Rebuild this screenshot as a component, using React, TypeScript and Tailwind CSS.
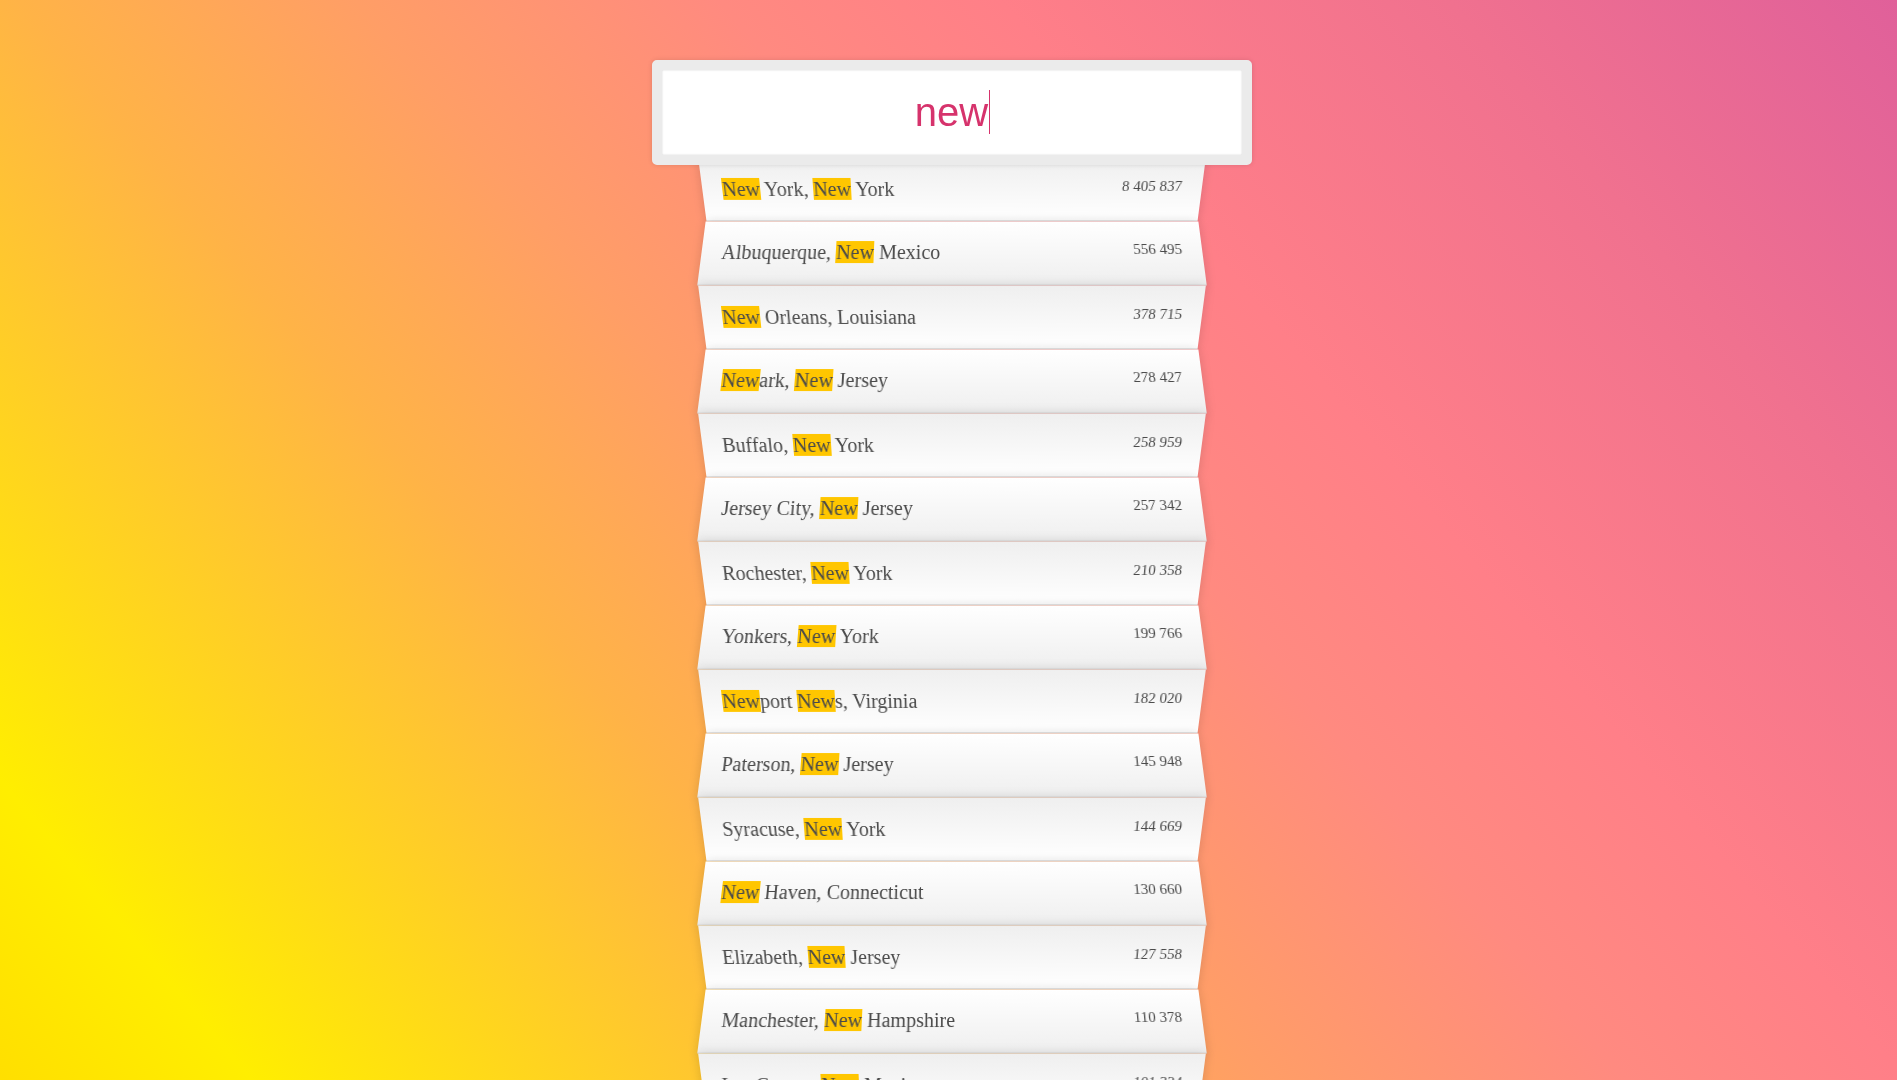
import React from "react";

const cities = [
  { name: "New York, New York", population: "8 405 837" },
  { name: "Albuquerque, New Mexico", population: "556 495" },
  { name: "New Orleans, Louisiana", population: "378 715" },
  { name: "Newark, New Jersey", population: "278 427" },
  { name: "Buffalo, New York", population: "258 959" },
  { name: "Jersey City, New Jersey", population: "257 342" },
  { name: "Rochester, New York", population: "210 358" },
  { name: "Yonkers, New York", population: "199 766" },
  { name: "Newport News, Virginia", population: "182 020" },
  { name: "Paterson, New Jersey", population: "145 948" },
  { name: "Syracuse, New York", population: "144 669" },
  { name: "New Haven, Connecticut", population: "130 660" },
  { name: "Elizabeth, New Jersey", population: "127 558" },
  { name: "Manchester, New Hampshire", population: "110 378" },
  { name: "Las Cruces, New Mexico", population: "101 324" },
  { name: "New Bedford, Massachusetts", population: "95 078" },
  { name: "Newton, Massachusetts", population: "87 971" },
];

const query = "new";

function Highlight({ text }: { text: string }) {
  const parts = text.split(new RegExp(`(${query})`, "gi"));
  return (
    <span>
      {parts.map((part, i) =>
        part.toLowerCase() === query ? (
          <span key={i} className="bg-[#ffc600]">
            {part}
          </span>
        ) : (
          <React.Fragment key={i}>{part}</React.Fragment>
        )
      )}
    </span>
  );
}

export default function App() {
  return (
    <div className="h-screen w-full overflow-hidden pl-[6px] bg-[linear-gradient(50deg,#ffdf00_0%,#ffee00_9%,#ffb347_33%,#ff9e66_45%,#ff8a80_58%,#ff7f88_68%,#f0718f_84%,#e0609a_100%)] font-['Liberation_Serif',serif] text-[20px] text-[#4a4a4a]">
      <form className="mx-auto mt-[60px] max-w-[500px]">
        {/* search input sits above the list */}
        <div className="relative z-10 -mx-[50px]">
          <input
            type="text"
            defaultValue="new"
            placeholder="City or State"
            className="block w-full rounded-[5px] border-[10px] border-[#ebebeb] bg-white p-5 text-center font-['Liberation_Sans',sans-serif] text-[40px] leading-[normal] text-[#d6336c] caret-transparent outline-0 shadow-[0_0_5px_rgba(0,0,0,0.12),inset_0_0_2px_rgba(0,0,0,0.19)]"
          />
          <span className="absolute top-[30px] left-[calc(50%+37px)] h-[44px] w-px bg-[#d6336c]" />
        </div>
        <ul className="relative -mt-[10px] m-0 p-0">
          {cities.map((city) => (
            <li
              key={city.name}
              className="flex list-none justify-between border-b border-[#d8d8d8] from-white to-[#efefef] p-5 capitalize leading-[normal] shadow-[0_0_10px_rgba(0,0,0,0.14)] odd:bg-linear-to-t odd:[transform:perspective(100px)_rotateX(-3deg)_translateY(3px)] even:bg-linear-to-b even:[transform:perspective(100px)_rotateX(3deg)_translateY(2px)_scale(1.001)]"
            >
              <Highlight text={city.name} />
              <span className="text-[15px] leading-[normal]">{city.population}</span>
            </li>
          ))}
        </ul>
      </form>
    </div>
  );
}
